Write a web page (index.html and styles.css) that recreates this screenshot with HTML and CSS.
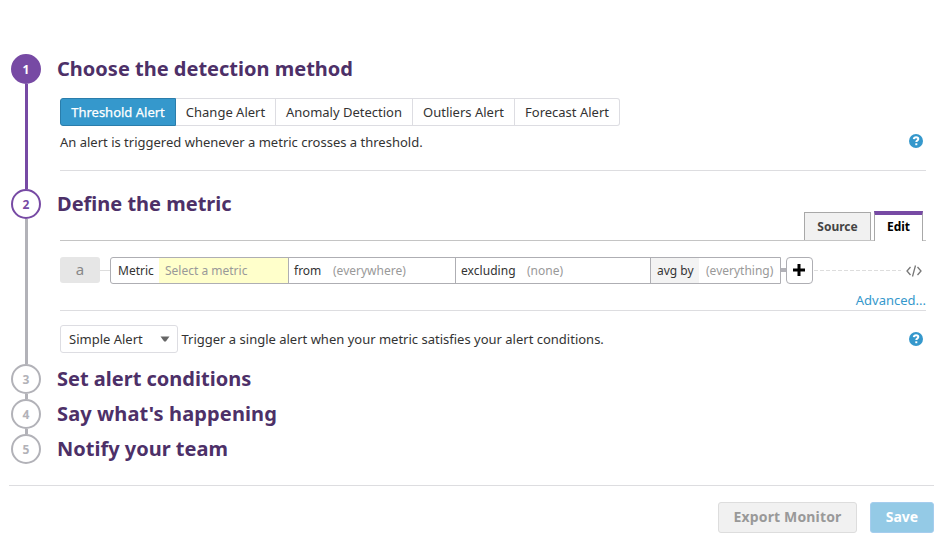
FILE: index.html
```html
<!DOCTYPE html>
<html lang="en">
<head>
<meta charset="utf-8">
<title>New Monitor</title>
<link rel="stylesheet" href="styles.css">
</head>
<body>
<main class="steps">
  <section class="step step-method done">
    <div class="rail"><span class="badge">1</span><span class="line"></span></div>
    <div class="content">
      <h2>Choose the detection method</h2>
      <div class="segments">
        <button class="seg active">Threshold Alert</button>
        <button class="seg change">Change Alert</button>
        <button class="seg anomaly">Anomaly Detection</button>
        <button class="seg outliers">Outliers Alert</button>
        <button class="seg forecast">Forecast Alert</button>
      </div>
      <div class="description">
        <p>An alert is triggered whenever a metric crosses a threshold.</p>
        <svg class="help" viewBox="0 0 14 14"><circle cx="7" cy="7" r="7"/><path d="M4.800 5.200C5 3.800 6 3.200 7.100 3.200c1.300 0 2.200.75 2.200 1.800 0 1.500-2 1.500-2 3"/><path d="M6.300 9.300h2v1.900h-2z" class="dot"/></svg>
      </div>
    </div>
  </section>

  <section class="step step-metric current">
    <div class="rail"><span class="badge">2</span><span class="line"></span></div>
    <div class="content">
      <h2>Define the metric</h2>
      <div class="tabs">
        <button class="tab">Source</button>
        <button class="tab selected">Edit</button>
      </div>
      <div class="query">
        <span class="query-name">a</span>
        <span class="link"></span>
        <div class="fields">
          <div class="field metric"><label>Metric</label><span class="value">Select a metric</span></div>
          <div class="field from"><label>from</label><span class="value">(everywhere)</span></div>
          <div class="field excluding"><label>excluding</label><span class="value">(none)</span></div>
          <div class="field avg"><label>avg by</label><span class="value">(everything)</span></div>
        </div>
        <span class="connector"></span>
        <button class="add"><svg viewBox="0 0 12 12"><path d="M4.500 0h3v4.500H12v3H7.500V12h-3V7.500H0v-3h4.500z"/></svg></button>
        <svg class="dashes" viewBox="0 0 87 1" preserveAspectRatio="none"><path d="M0 .5h87"/></svg>
        <svg class="code" viewBox="0 0 16 12"><path d="M4.500 2L1 6l3.500 4M11.500 2L15 6l-3.500 4M9.500.5l-3 11"/></svg>
      </div>
      <div class="advanced"><a>Advanced...</a></div>
      <div class="alert-type">
        <button class="select"><span>Simple Alert</span><svg viewBox="0 0 10 6"><path d="M.5.500h9L5.800 5.500H4.200z"/></svg></button>
        <p>Trigger a single alert when your metric satisfies your alert conditions.</p>
        <svg class="help" viewBox="0 0 14 14"><circle cx="7" cy="7" r="7"/><path d="M4.800 5.200C5 3.800 6 3.200 7.100 3.200c1.300 0 2.200.75 2.200 1.800 0 1.500-2 1.500-2 3"/><path d="M6.300 9.300h2v1.900h-2z" class="dot"/></svg>
      </div>
    </div>
  </section>

  <section class="step">
    <div class="rail"><span class="badge">3</span><span class="line"></span></div>
    <div class="content"><h2>Set alert conditions</h2></div>
  </section>
  <section class="step">
    <div class="rail"><span class="badge">4</span><span class="line"></span></div>
    <div class="content"><h2 class="say">Say what's happening</h2></div>
  </section>
  <section class="step last">
    <div class="rail"><span class="badge">5</span></div>
    <div class="content"><h2>Notify your team</h2></div>
  </section>
</main>
<footer class="footer">
  <button class="btn export">Export Monitor</button>
  <button class="btn save">Save</button>
</footer>
</body>
</html>
```
FILE: styles.css
```css
* { box-sizing: border-box; }
body {
  margin: 0;
  background: #fff;
  color: #333;
  font: 13px/20px "Noto Sans", "Open Sans", sans-serif;
}
button { font: inherit; color: inherit; margin: 0; padding: 0; white-space: nowrap; }
h2, p { margin: 0; white-space: nowrap; }
.steps { padding: 54px 23px 0 11px; }
.step { display: flex; height: 35px; }
.step-method { height: 135px; }
.step-metric { height: 175px; }
.step.last { height: 30px; }
.rail { width: 30px; display: flex; flex-direction: column; align-items: center; }
.badge {
  width: 30px; height: 30px; flex: none;
  border: 2px solid #b2b2b8; border-radius: 50%;
  color: #b2b2b8; font-weight: 700; font-size: 12px; line-height: 27px; text-align: center;
}
.done .badge { background: #774aa4; border-color: #774aa4; color: #fff; }
.current .badge { border-color: #774aa4; color: #774aa4; }
.line { width: 3px; flex: 1; background: #b2b2b8; margin-left: 1px; }
.done .line { background: #774aa4; }
.content { flex: 1; margin-left: 19px; min-width: 0; }
h2 { height: 30px; margin-left: -3px; font-size: 20px; line-height: 30px; font-weight: 700; color: #4d3068; }
h2.say { letter-spacing: .12px; }

.segments { display: flex; margin-top: 14px; height: 28px; }
.seg { border: 1px solid #dddde2; border-left: 0; background: #fff; }
.seg.active { width: 116px; background: #3598cc; border: 1px solid #2a7dab; color: #fff; border-radius: 3px 0 0 3px; -webkit-text-stroke: .25px #fff; }
.change { width: 100px; }
.anomaly { width: 137px; }
.outliers { width: 102px; }
.forecast { width: 105px; border-radius: 0 3px 3px 0; }
.description { display: flex; align-items: center; justify-content: space-between; height: 45px; padding: 0 3px 13px 0; border-bottom: 1px solid #dddde0; }
.help { width: 14px; height: 14px; flex: none; display: block; margin-bottom: 1px; }
.help circle { fill: #3598cc; }
.help path { fill: none; stroke: #fff; stroke-width: 2; }
.help .dot { fill: #fff; stroke: none; }

.tabs { display: flex; justify-content: flex-end; align-items: flex-end; height: 30px; margin-top: -8px; gap: 3px; padding-right: 3px; border-bottom: 1px solid #c4c4c4; }
.tab { width: 67px; height: 28px; border: 1px solid #a8a8a8; border-bottom: 0; background: #f1f1f1; color: #444; font-weight: 700; font-size: 12px; }
.tab.selected { width: 49px; height: 30px; margin-bottom: -1px; padding-bottom: 2px; border-top: 4px solid #774aa4; background: #fff; color: #000; }
.query { display: flex; align-items: center; height: 27px; margin-top: 16px; font-size: 12px; }
.query-name { width: 40px; height: 26px; margin-bottom: 1px; border-radius: 3px; background: #e6e6e6; color: #888; font-size: 15px; line-height: 25px; text-align: center; }
.link { width: 10px; height: 1px; background: #ddd; }
.fields { display: flex; width: 671px; height: 27px; border: 1px solid #aeaeb3; border-radius: 3px 0 0 3px; overflow: hidden; line-height: 25px; white-space: nowrap; }
.field { display: flex; border-right: 1px solid #aeaeb3; }
.field:last-child { border-right: 0; }
.value { color: #999; }
.metric { width: 178px; }
.metric label { width: 48px; padding-left: 7px; }
.metric .value { flex: 1; padding-left: 6px; background: #ffffcb; }
.from { width: 167px; }
.from label { width: 44px; padding-left: 5px; }
.excluding { width: 195px; }
.excluding label { width: 71px; padding-left: 5px; letter-spacing: .05px; }
.avg { flex: 1; }
.avg label { width: 48px; padding-left: 6px; background: #f3f3f3; }
.avg .value { padding-left: 7px; }
.connector { width: 5px; height: 4px; margin-bottom: 1px; background: #b2b2b8; }
.add { width: 27px; height: 27px; border: 1px solid #aeaeb3; border-radius: 4px; background: #fff; display: flex; align-items: center; justify-content: center; }
.add svg { width: 12px; height: 12px; margin: 0 1px 1px 0; }
.dashes { width: 87px; height: 1px; margin-left: 1px; }
.dashes path { stroke: #ddd; stroke-dasharray: 4 2; }
.code { width: 16px; height: 12px; margin: 1px 0 0 5px; }
.code path { fill: none; stroke: #777; stroke-width: 1.300; }
.advanced { height: 27px; padding-top: 6px; text-align: right; border-bottom: 1px solid #dddde0; color: #3598cc; }
.alert-type { display: flex; align-items: center; margin-top: 14px; padding-right: 3px; }
.select { width: 118px; height: 28px; border: 1px solid #dddde2; border-radius: 3px; background: #fff; display: flex; align-items: center; justify-content: space-between; padding: 0 7px 0 8px; margin-right: 3.500px; }
.select svg { width: 10px; height: 6px; fill: #666; }
.alert-type .help { margin-left: auto; }

.footer { display: flex; justify-content: flex-end; gap: 13px; margin: 21px 15px 0 9px; padding-top: 16px; border-top: 1px solid #dddde0; }
.btn { height: 31px; padding-bottom: 2px; border: 1px solid #ddd; border-radius: 3px; font-size: 14px; font-weight: 700; }
.export { width: 139px; background: #f1f1f1; color: #999; letter-spacing: .15px; }
.save { width: 64px; background: #94cae6; border-color: #a5cdee; color: #fff; }
```
